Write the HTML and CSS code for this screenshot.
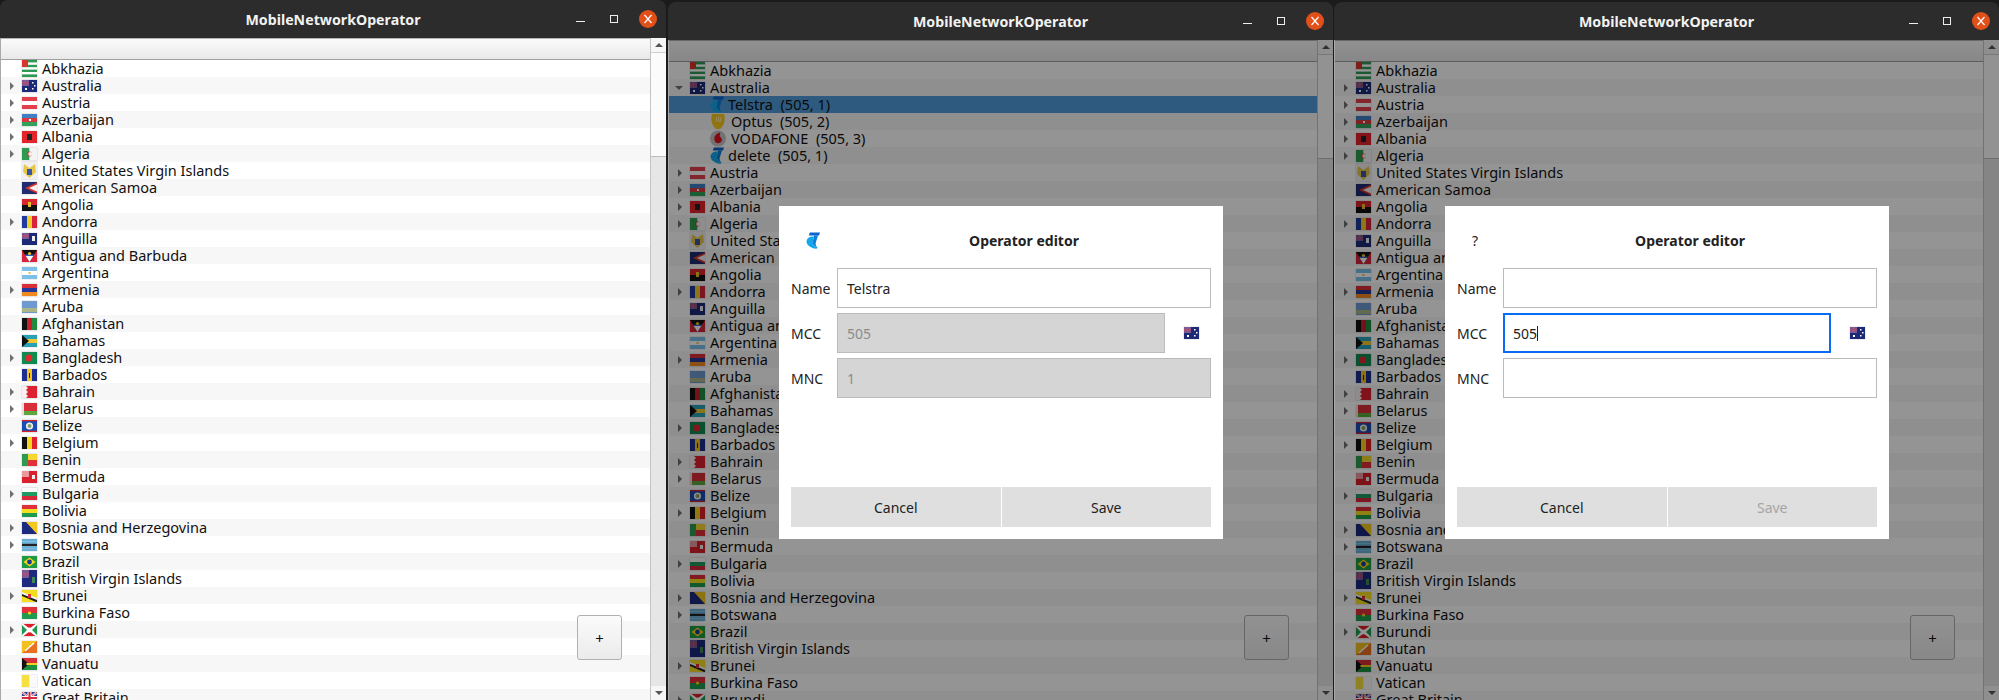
FILE: index.html
```html
<!DOCTYPE html>
<html lang="en">
<head>
  <meta charset="UTF-8">
  <title>MobileNetworkOperator</title>
  <link rel="stylesheet" href="styles.css">
</head>
<body>
  <div class="window window-first" id="winList"></div>
  <div class="window" id="winEdit"></div>
  <div class="window window-last" id="winNew"></div>
  <script src="app.js"></script>
</body>
</html>
```
FILE: styles.css
```css
body {
  margin: 0;
  height: 100vh;
  overflow: hidden;
  display: flex;
  background: #1b1b1b;
  font-family: "Noto Sans", "Open Sans", sans-serif;
  font-size: 14px;
  color: #111;
}
.window {
  position: relative;
  box-sizing: border-box;
  width: 665px;
  height: 100%;
  margin-left: 2px;
  padding-top: 2px;
  display: flex;
  flex-direction: column;
  overflow: hidden;
}
.window-first {
  width: 666px;
  margin-left: 0;
  padding-top: 0;
}
.window-last {
  margin-left: 1px;
}
.titlebar {
  flex: none;
  height: 38px;
  display: grid;
  grid-template-columns: 1fr auto 1fr;
  align-items: center;
  background: #2c2c2c;
  border-radius: 8px 8px 0 0;
  color: #f2f2f2;
}
.title {
  grid-column: 2;
  font-size: 14.2px;
  font-weight: 700;
}
.controls {
  grid-column: 3;
  justify-self: end;
  display: flex;
  margin-right: 1px;
}
.control {
  width: 34px;
  height: 18px;
  display: flex;
  align-items: center;
  justify-content: center;
}
.icon-min {
  width: 9px;
  height: 1px;
  margin-top: 6px;
  border-top: 1px solid #eee;
}
.icon-max {
  width: 6px;
  height: 6px;
  border: 1px solid #eee;
}
.icon-close {
  width: 18px;
  height: 18px;
  border-radius: 50%;
  background: #e2501a;
}
.icon-close svg {
  display: block;
}
.content {
  position: relative;
  flex: 1;
  min-height: 0;
  display: flex;
  background: #fff;
  border-left: 1px solid #a9a9a9;
}
.tree {
  flex: 1;
  min-width: 0;
  overflow: hidden;
}
.tree-header {
  height: 20px;
  background: linear-gradient(#fafafa, #e9e9e9);
  border-top: 1px solid #b5b5b5;
  border-bottom: 1px solid #a0a0a0;
}
.row {
  display: flex;
  align-items: center;
  height: 17px;
  font-size: 14.5px;
  white-space: nowrap;
}
.row-label {
  line-height: 17px;
  padding-bottom: 1px;
}
.row:nth-child(even) {
  background: #f7f7f7;
}
.row.selected {
  background: #4f9cd9;
}
.branch {
  flex: none;
  width: 21px;
  height: 17px;
  position: relative;
}
.branch.closed::after {
  content: "";
  position: absolute;
  left: 9px;
  top: 5px;
  border: 4px solid transparent;
  border-left-color: #707070;
  border-right-width: 0;
}
.branch.open::after {
  content: "";
  position: absolute;
  left: 6px;
  top: 7px;
  border: 4px solid transparent;
  border-top-color: #707070;
  border-bottom-width: 0;
}
.flag {
  flex: none;
  width: 15px;
  height: 12px;
  margin-right: 5px;
  box-shadow: 0 0 1px rgba(0, 0, 0, 0.4);
}
.flag.tall {
  height: 17px;
}
.operator {
  flex: none;
  width: 14px;
  height: 17px;
  margin-left: 41px;
  margin-right: 4px;
}
.operator.wide {
  width: 16px;
  margin-right: 5px;
}
.scrollbar {
  flex: none;
  width: 15px;
  display: flex;
  flex-direction: column;
  background: #e6e6e6;
  border-left: 1px solid #c4c4c4;
}
.scroll-btn {
  flex: none;
  height: 14px;
  display: flex;
  align-items: center;
  justify-content: center;
  background: #f6f6f6;
}
.scroll-btn.up::after {
  content: "";
  border: 4px solid transparent;
  border-bottom-color: #555;
  border-top-width: 0;
}
.scroll-btn.down::after {
  content: "";
  border: 4px solid transparent;
  border-top-color: #555;
  border-bottom-width: 0;
}
.thumb {
  flex: none;
  height: 105px;
  background: #fbfbfb;
  border-top: 1px solid #cfcfcf;
  border-bottom: 1px solid #bdbdbd;
  box-sizing: border-box;
}
.track {
  flex: 1;
}
.add-btn {
  position: absolute;
  right: 44px;
  bottom: 40px;
  width: 45px;
  height: 45px;
  box-sizing: border-box;
  border: 1px solid #b0b0b0;
  border-radius: 3px;
  background: linear-gradient(#fbfbfb, #ebebeb);
  font: inherit;
  font-size: 15px;
  color: #111;
  padding: 0;
}
.overlay {
  position: absolute;
  inset: 0;
  display: flex;
  align-items: center;
  justify-content: center;
  padding-top: 5px;
  background: rgba(0, 0, 0, 0.42);
}
.dialog {
  box-sizing: border-box;
  width: 444px;
  height: 333px;
  padding: 12px;
  display: flex;
  flex-direction: column;
  justify-content: space-between;
  background: #fff;
  color: #222;
}
.form {
  display: grid;
  grid-template-columns: 46px 1fr;
  row-gap: 5px;
  align-items: center;
}
.dialog-icon {
  height: 45px;
  display: flex;
  align-items: center;
  padding-left: 15px;
}
.dialog-icon .operator {
  margin: 0;
}
.dialog-title {
  font-weight: 700;
  font-size: 14px;
  text-align: center;
}
.input-row {
  display: flex;
}
.input {
  flex: 1;
  box-sizing: border-box;
  height: 40px;
  padding: 0 9px;
  display: flex;
  align-items: center;
  background: #fff;
  border: 1px solid #bbb;
}
.input.disabled {
  background: #d5d5d5;
  color: #8c8c8c;
}
.input.focused {
  border: 2px solid #0a6cf5;
  padding: 0 8px;
}
.caret {
  width: 1px;
  height: 15px;
  background: #222;
}
.flag-cell {
  flex: none;
  width: 46px;
  display: flex;
  align-items: center;
  justify-content: center;
  padding-left: 6px;
  box-sizing: border-box;
}
.flag-cell .flag {
  margin: 0;
}
.buttons {
  display: flex;
  gap: 1px;
}
.dialog-btn {
  flex: 1;
  height: 40px;
  border: none;
  background: #dfdfdf;
  font: inherit;
  color: #222;
}
.dialog-btn.disabled {
  color: #a5a5a5;
}
```
FILE: app.js
```js
function r(x, y, w, h, c) {
  return `<rect x="${x}" y="${y}" width="${w}" height="${h}" fill="${c}"/>`;
}
function hBands() {
  const colors = [...arguments];
  const h = 12 / colors.length;
  return colors.map((c, i) => r(0, i * h, 15, h + 0.1, c)).join('');
}
function vBands() {
  const colors = [...arguments];
  const w = 15 / colors.length;
  return colors.map((c, i) => r(i * w, 0, w + 0.1, 12, c)).join('');
}
const ensign = '<rect width="15" height="12" fill="#1c2a78"/>' + r(0, 0, 7, 6, '#7a5a90') + r(3, 0, 1, 6, '#e0405a') + r(0, 2.5, 7, 1, '#e0405a');

const FLAGS = {
  abkhazia: '<rect width="15" height="17" fill="#fff"/>' + r(0, 0, 15, 2.4, '#2e9a55') + r(0, 4.8, 15, 2.4, '#2e9a55') + r(0, 9.6, 15, 2.4, '#2e9a55') + r(0, 14.4, 15, 2.6, '#2e9a55') + r(0, 0, 6, 7, '#d9352c'),
  australia: ensign + r(10, 2, 1.5, 1.5, '#fff') + r(12, 5, 1.5, 1.5, '#fff') + r(10, 8, 1.5, 1.5, '#fff') + r(3, 8, 2, 2, '#fff'),
  austria: hBands('#e2404c', '#fff', '#e2404c'),
  azerbaijan: hBands('#3f7fc4', '#d8393d', '#33a05c') + r(7, 5, 2, 2, '#fff'),
  albania: '<rect width="15" height="12" fill="#e3242b"/>' + r(5, 3, 5, 6, '#222'),
  algeria: vBands('#2f9a52', '#f4f4f4') + '<circle cx="7.5" cy="6" r="2.5" fill="#d9352c"/><circle cx="8.3" cy="6" r="2" fill="#f4f4f4"/>',
  usvi: '<rect width="15" height="17" fill="#f0f0f4"/><path d="M7.5 6 L2 2 L1 10 L7.5 16 L14 10 L13 2Z" fill="#e8c84a"/>' + r(5, 7, 5, 6, '#3a55a8'),
  samoa: '<rect width="15" height="12" fill="#1f2c70"/><path d="M15 0.5V11.5L3 6Z" fill="#d9352c"/><path d="M15 2.5V9.5L7 6Z" fill="#f2f2f2"/>',
  angola: hBands('#d9252c', '#111') + r(6, 3, 3, 5, '#e8c030'),
  andorra: vBands('#1f3a9a', '#f2cc2a', '#d8233a'),
  anguilla: ensign + r(10, 3, 3, 5, '#eee'),
  antigua: '<rect width="15" height="12" fill="#d8233a"/><path d="M0 0H15L7.5 12Z" fill="#111"/><path d="M3.7 6H11.3L7.5 12Z" fill="#fff"/><path d="M2.6 4.4H12.4L11.3 6H3.7Z" fill="#2b64c4"/><circle cx="7.5" cy="3.5" r="1.6" fill="#f0c020"/>',
  argentina: hBands('#7cc0ea', '#fff', '#7cc0ea') + r(6.5, 5, 2, 2, '#e8c040'),
  armenia: hBands('#d8303a', '#243a9a', '#f08a20'),
  aruba: '<rect width="15" height="12" fill="#6f9ad0"/>' + r(0, 7.5, 15, 1, '#e8d040') + r(0, 9.5, 15, 1, '#e8d040'),
  afghanistan: vBands('#111', '#c8202a', '#1f8a40'),
  bahamas: hBands('#2aa0b8', '#f0c830', '#2aa0b8') + '<path d="M0 0L7 6L0 12Z" fill="#111"/>',
  bangladesh: '<rect width="15" height="12" fill="#0f8a50"/><circle cx="6.8" cy="6" r="3.5" fill="#e02a30"/>',
  barbados: vBands('#1c2e90', '#f2c41e', '#1c2e90') + r(7, 4, 1, 5, '#222'),
  bahrain: '<rect width="15" height="12" fill="#dd2030"/><path d="M0 0H4L6 2L4 4L6 6L4 8L6 10L4 12H0Z" fill="#f8f0f0"/>',
  belarus: hBands('#d8303a', '#d8303a', '#5ca83c') + r(0, 0, 2, 12, '#f4dada'),
  belize: '<rect width="15" height="12" fill="#1c4cb0"/>' + r(0, 0, 15, 1.2, '#d8202a') + r(0, 10.8, 15, 1.2, '#d8202a') + '<circle cx="7.5" cy="6" r="3.6" fill="#f0f0f0"/><circle cx="7.5" cy="6" r="2" fill="#7ea070"/>',
  belgium: vBands('#111', '#f6d420', '#e0202a'),
  benin: '<rect width="15" height="12" fill="#f4d830"/>' + r(6, 6, 9, 6, '#e0303a') + r(0, 0, 6, 12, '#2f9a52'),
  bermuda: '<rect width="15" height="12" fill="#d9202c"/>' + r(0, 0, 7, 6, '#e89aa0') + r(10, 4, 3, 4, '#eee'),
  bulgaria: hBands('#fafafa', '#1f9a60', '#d8283a'),
  bolivia: hBands('#e0303a', '#f4e020', '#1f9a50'),
  bosnia: '<rect width="15" height="12" fill="#1c2a80"/><path d="M4 0H15V12Z" fill="#f2c81e"/>',
  botswana: hBands('#68b0d8', '#68b0d8', '#222', '#68b0d8', '#68b0d8'),
  brazil: '<rect width="15" height="12" fill="#1f9a40"/><path d="M7.5 1.5L13.5 6L7.5 10.5L1.5 6Z" fill="#f2d820"/><circle cx="7.5" cy="6" r="2.4" fill="#1c3a90"/>',
  bvi: '<rect width="15" height="17" fill="#1c2a80"/>' + r(0, 0, 7, 8, '#7a5a90') + r(3, 0, 1, 8, '#e0405a') + r(0, 3.5, 7, 1, '#e0405a') + r(10, 7, 3, 6, '#3f8a50'),
  brunei: '<rect width="15" height="12" fill="#f4dc20"/><path d="M0 2L15 8V11L0 5Z" fill="#f8f8f8"/><path d="M0 4L15 10V12H14L0 6Z" fill="#222"/>' + r(6, 4, 3, 4, '#d8303a'),
  burkina: hBands('#e0303a', '#1f9a50') + '<circle cx="7.5" cy="6" r="1.6" fill="#f4d820"/>',
  burundi: '<rect width="15" height="12" fill="#fff"/><path d="M1.5 0H13.5L7.5 4.5ZM1.5 12H13.5L7.5 7.5Z" fill="#d9202c"/><path d="M0 1V11L5 6ZM15 1V11L10 6Z" fill="#1f9a50"/><circle cx="7.5" cy="6" r="2.4" fill="#fff"/>',
  bhutan: '<rect width="15" height="12" fill="#f4c020"/><path d="M15 0V12H0Z" fill="#e87020"/><path d="M3 10L12 2" stroke="#fff" stroke-width="1.5"/>',
  vanuatu: hBands('#d8303a', '#1f9040') + '<path d="M0 0L7 6L0 12Z" fill="#111"/><path d="M0 5H15V7H0Z" fill="#f0d020"/><path d="M0 2L5 6L0 10Z" fill="#111"/>',
  vatican: vBands('#f6e040', '#fafafa'),
  britain: '<rect width="15" height="12" fill="#2a3f90"/><path d="M0 0L15 12M15 0L0 12" stroke="#fff" stroke-width="2"/><path d="M0 0L15 12M15 0L0 12" stroke="#d8283a" stroke-width="0.8"/>' + r(5.5, 0, 4, 12, '#fff') + r(0, 4, 15, 4, '#fff') + r(6.5, 0, 2, 12, '#d8283a') + r(0, 5, 15, 2, '#d8283a')
};

const TALL = ['abkhazia', 'usvi', 'bvi'];

// name, flag id, has operators
const COUNTRIES = [
  ['Abkhazia', 'abkhazia', 0], ['Australia', 'australia', 1], ['Austria', 'austria', 1],
  ['Azerbaijan', 'azerbaijan', 1], ['Albania', 'albania', 1], ['Algeria', 'algeria', 1],
  ['United States Virgin Islands', 'usvi', 0], ['American Samoa', 'samoa', 0], ['Angolia', 'angola', 0],
  ['Andorra', 'andorra', 1], ['Anguilla', 'anguilla', 0], ['Antigua and Barbuda', 'antigua', 0],
  ['Argentina', 'argentina', 0], ['Armenia', 'armenia', 1], ['Aruba', 'aruba', 0],
  ['Afghanistan', 'afghanistan', 0], ['Bahamas', 'bahamas', 0], ['Bangladesh', 'bangladesh', 1],
  ['Barbados', 'barbados', 0], ['Bahrain', 'bahrain', 1], ['Belarus', 'belarus', 1],
  ['Belize', 'belize', 0], ['Belgium', 'belgium', 1], ['Benin', 'benin', 0],
  ['Bermuda', 'bermuda', 0], ['Bulgaria', 'bulgaria', 1], ['Bolivia', 'bolivia', 0],
  ['Bosnia and Herzegovina', 'bosnia', 1], ['Botswana', 'botswana', 1], ['Brazil', 'brazil', 0],
  ['British Virgin Islands', 'bvi', 0], ['Brunei', 'brunei', 1], ['Burkina Faso', 'burkina', 0],
  ['Burundi', 'burundi', 1], ['Bhutan', 'bhutan', 0], ['Vanuatu', 'vanuatu', 0],
  ['Vatican', 'vatican', 0], ['Great Britain', 'britain', 0]
];

const TELSTRA = '<path d="M0.5 9.5C0.5 7 2.5 5 6 4.6L7.8 4.6L6.8 10C6.5 12.5 8.5 14.5 11.5 15.5C11.5 16.5 10 17 8.5 16.6C4.5 15.6 0.5 13 0.5 9.5Z" fill="#14a8ea"/><path d="M8 3.5H12L9.8 10.5C9.3 12.5 10 14.3 11.5 15.5C8.5 14.5 6.5 12.5 6.8 10Z" fill="#0b7fd8"/><path d="M3.8 0.5H14L13 3.5H2.8Z" fill="#0b64cc"/>';
const OPTUS = '<path d="M2 1H14C15.5 5 15 12 10 16H6C1 12 0.5 5 2 1Z" fill="#f6c81e"/><path d="M6 4L7 9M8.5 3.5L9 9M11 4L10 9" stroke="#fff2b0" stroke-width="1"/>';
const VODAFONE = '<circle cx="8" cy="8.5" r="8" fill="#c4c4c4"/><path d="M10 2.5C6 3.5 3.8 6.5 4.5 10C5.2 14 10.5 14.5 11.8 10.5C12.5 8 9.8 7.5 9.8 5.5C9.8 4.5 10.5 3.5 10 2.5Z" fill="#e0101a"/>';

function flagSvg(id) {
  const h = TALL.includes(id) ? 17 : 12;
  const cls = TALL.includes(id) ? 'flag tall' : 'flag';
  return `<svg class="${cls}" viewBox="0 0 15 ${h}">${FLAGS[id]}</svg>`;
}

function telstraSvg() {
  return `<svg class="operator" viewBox="0 0 14 17">${TELSTRA}</svg>`;
}

function wideSvg(body) {
  return `<svg class="operator wide" viewBox="0 0 16 17">${body}</svg>`;
}

function countryRow(c, branch) {
  const state = branch || (c[2] ? 'closed' : '');
  return `<div class="row"><span class="branch ${state}"></span>${flagSvg(c[1])}<span class="row-label">${c[0]}</span></div>`;
}

function treeHtml(rows) {
  return `<div class="tree">
    <div class="tree-header"></div>
    <div class="rows">${rows}</div>
  </div>
  <div class="scrollbar">
    <div class="scroll-btn up"></div>
    <div class="thumb"></div>
    <div class="track"></div>
    <div class="scroll-btn down"></div>
  </div>
  <button class="add-btn">+</button>`;
}

function windowHtml(rows, dialog) {
  return `<div class="titlebar">
    <span class="title">MobileNetworkOperator</span>
    <div class="controls">
      <span class="control"><span class="icon-min"></span></span>
      <span class="control"><span class="icon-max"></span></span>
      <span class="control"><span class="icon-close"><svg width="18" height="18" viewBox="0 0 18 18"><path d="M5.5 5L12.5 13M12.5 5L5.5 13" stroke="#fff" stroke-width="1.2" fill="none"/></svg></span></span>
    </div>
  </div>
  <div class="content">${treeHtml(rows)}${dialog || ''}</div>`;
}

function dialogHtml(opts) {
  return `<div class="overlay"><div class="dialog">
    <div class="form">
      <div class="dialog-icon">${opts.icon}</div>
      <div class="dialog-title">Operator editor</div>
      <span>Name</span>
      <div class="input">${opts.name}</div>
      <span>MCC</span>
      <div class="input-row">${opts.mcc}<span class="flag-cell">${flagSvg('australia')}</span></div>
      <span>MNC</span>
      <div class="input ${opts.mncClass}">${opts.mnc}</div>
    </div>
    <div class="buttons">
      <button class="dialog-btn">Cancel</button>
      <button class="dialog-btn ${opts.saveClass}">Save</button>
    </div>
  </div></div>`;
}

const allRows = COUNTRIES.map(c => countryRow(c)).join('');

const expandedRows = [
  countryRow(COUNTRIES[0]),
  countryRow(COUNTRIES[1], 'open'),
  `<div class="row selected">${telstraSvg()}<span class="row-label">Telstra&nbsp; (505, 1)</span></div>`,
  `<div class="row">${wideSvg(OPTUS)}<span class="row-label">Optus&nbsp; (505, 2)</span></div>`,
  `<div class="row">${wideSvg(VODAFONE)}<span class="row-label">VODAFONE&nbsp; (505, 3)</span></div>`,
  `<div class="row">${telstraSvg()}<span class="row-label">delete&nbsp; (505, 1)</span></div>`,
  COUNTRIES.slice(2, 36).map(c => countryRow(c)).join('')
].join('');

document.getElementById('winList').innerHTML = windowHtml(allRows);
document.getElementById('winEdit').innerHTML = windowHtml(expandedRows, dialogHtml({
  icon: telstraSvg(),
  name: 'Telstra',
  mcc: '<div class="input disabled">505</div>',
  mnc: '1',
  mncClass: 'disabled',
  saveClass: ''
}));
document.getElementById('winNew').innerHTML = windowHtml(allRows, dialogHtml({
  icon: '<span class="question">?</span>',
  name: '',
  mcc: '<div class="input focused">505<span class="caret"></span></div>',
  mnc: '',
  mncClass: '',
  saveClass: 'disabled'
}));
```
